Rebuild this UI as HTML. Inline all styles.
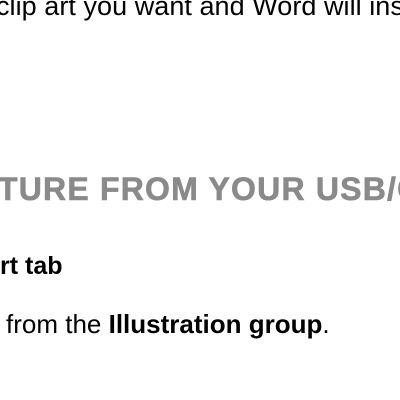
<!DOCTYPE html>
<html><head><style>
html,body{margin:0;width:400px;height:400px;background:#fff;overflow:hidden;position:relative}
div{position:absolute;white-space:nowrap;font-family:"Liberation Sans",sans-serif;color:#000}
.t{font-size:26px;line-height:30px}
</style></head><body>
<div class="t" style="left:-4px;top:-9px;font-size:27px;letter-spacing:0.05px">clip art you want and Word will insert</div>
<div style="left:-2px;top:172px;font-size:32px;line-height:34px;font-weight:900;color:#8a8a8a;letter-spacing:1.2px;-webkit-text-stroke:0.6px #8a8a8a">TURE FROM YOUR USB/CD</div>
<div class="t" style="left:0px;top:251px;font-size:25px;font-weight:bold">rt tab</div>
<div class="t" style="left:6px;top:309px">from the <b>Illustration group</b>.</div>
</body></html>
